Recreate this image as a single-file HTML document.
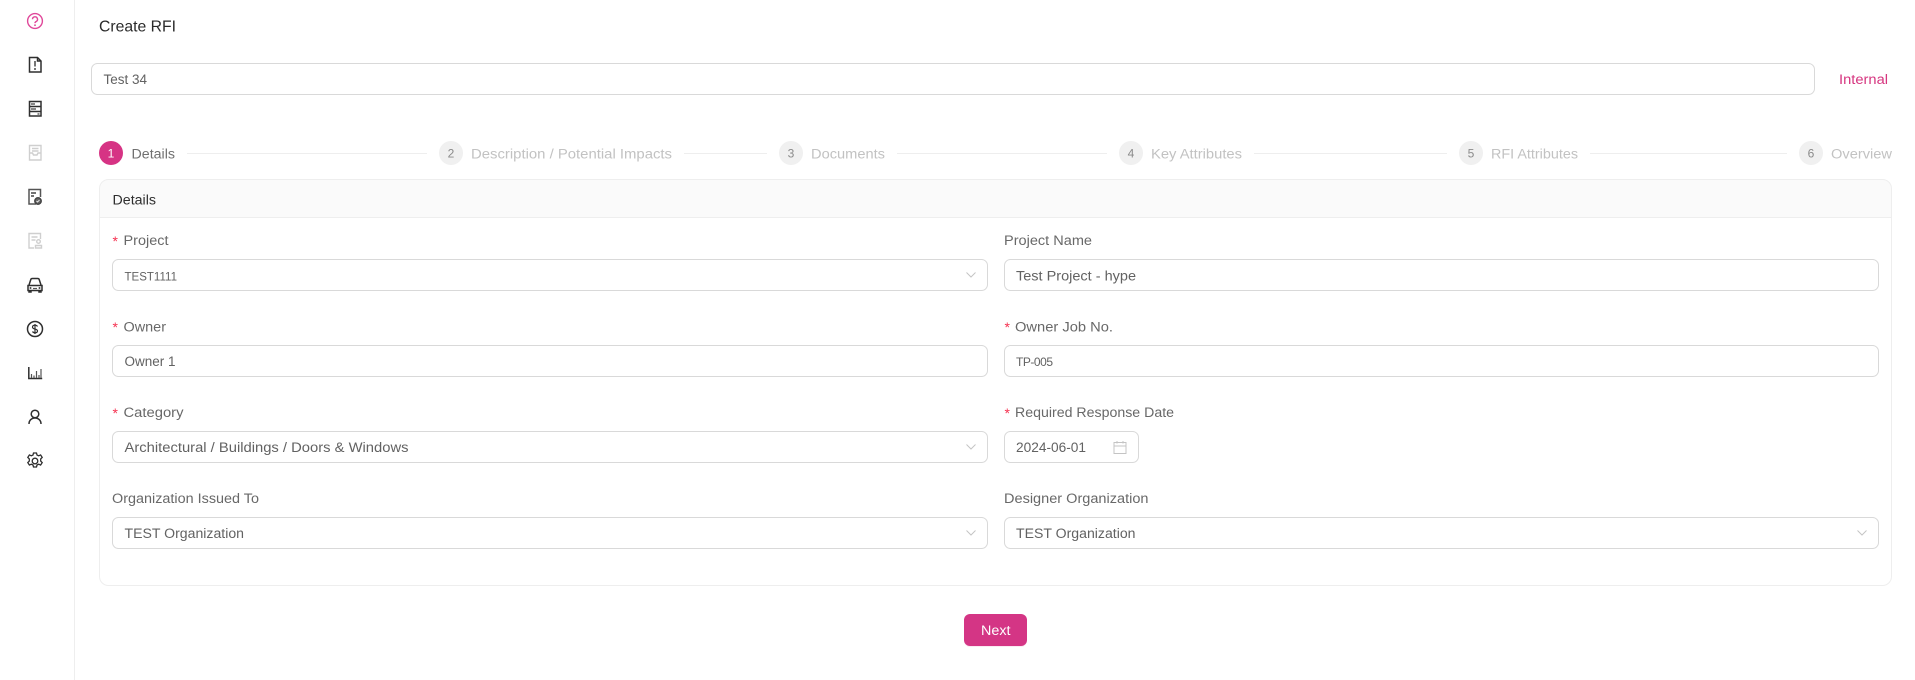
<!DOCTYPE html>
<html><head><meta charset="utf-8"><title>Create RFI</title>
<style>
html,body{margin:0;padding:0;background:#fff;width:1915px;height:680px;overflow:hidden}
svg{display:block}
text{font-family:"Liberation Sans",sans-serif;font-size:13.5px;fill:#686868}
.v{fill:#626262}
.d{fill:#c2c2c2}
.n{fill:#8a8a8a;font-size:12px;text-anchor:middle}
.s{fill:#f5304f;font-size:14px}
.b{fill:none;stroke:#d9d9d9;stroke-width:1}
.l{stroke:#eeeeee;stroke-width:1}
.c{fill:none;stroke:#c4c4c4;stroke-width:1}
.i{fill:none;stroke:#2f2f2f;stroke-width:1.5}
.g{fill:none;stroke:#cfcfcf;stroke-width:1.4}
</style></head><body>
<svg xmlns="http://www.w3.org/2000/svg" width="1915" height="680" viewBox="0 0 1915 680">
<rect width="1915" height="680" fill="#fff"/>
<line x1="74.5" y1="0" x2="74.5" y2="680" stroke="#eeeeee"/>

<!-- sidebar icons -->
<g fill="none" stroke="#e0489a" stroke-width="1.4"><circle cx="35" cy="21" r="7.4"/><path d="M32.5 19.3a2.5 2.5 0 1 1 3.7 2.2c-.8.4-1.2.9-1.2 1.6"/></g><circle cx="35" cy="25.2" r=".9" fill="#e0489a"/>
<g class="i"><path d="M29.500 57.500h8l3.500 3.500v11h-11.500z"/><path d="M37.500 57.500v3.500h3.500"/><path d="M35 61v5.500M35 68v2" stroke-width="1.800" stroke="#666"/></g>
<g class="i"><rect x="29.500" y="101.500" width="11.500" height="14.500"/><path d="M29.500 106.500h11.500M29.500 111.500h11.500"/><path d="M31 104h4M31 109h5M37.500 114h2" stroke="#777" stroke-width="1.800"/></g>
<g class="g"><path d="M29.500 145.500h11.500v14.500h-11.500z"/><path d="M29.500 153h3l1 2h3.500l1-2h3M32 148.500h6.500M32 151h6.500"/></g>
<g class="i"><path d="M40.500 197v-7.500h-11.500v14.500h7" stroke="#555"/><path d="M31 193h5M31 196h3" stroke="#444"/><circle cx="38" cy="201" r="3.200" fill="#666" stroke="#444"/></g>
<path d="M36.500 201l1 1 2-2" fill="none" stroke="#fff" stroke-width=".8"/>
<g class="g"><path d="M40.500 239v-5.500h-11.500v14.500h5"/><path d="M31.500 237h6M31.500 240h4"/><circle cx="38.500" cy="241.500" r="1.800"/><path d="M35.500 248v-2.500h6v2.500z"/></g>
<g class="i"><path d="M29 285l1.800-5.500c.2-.7.800-1 1.500-1h5.400c.7 0 1.300.3 1.500 1l1.800 5.500"/><path d="M28 285.500h14v5h-14zM29 290.500v1.500h2v-1.500M39 290.500v1.500h2v-1.500"/></g>
<path d="M33 288.500h4" stroke="#555" stroke-width="1.200"/><circle cx="30.500" cy="288" r="1" fill="#444"/><circle cx="39.500" cy="288" r="1" fill="#444"/>
<g class="i"><circle cx="35" cy="329" r="7.500"/><path d="M37.500 326.500c-.5-.9-1.400-1.300-2.500-1.300-1.400 0-2.500.7-2.500 1.900 0 2.600 5 1.300 5 3.800 0 1.200-1.100 1.900-2.500 1.900-1.100 0-2-.5-2.500-1.300M35 324v10" stroke-width="1.200"/></g>
<g class="i"><path d="M28.800 367v11.500h13.400"/><path d="M31.500 378v-4M34 378v-2.500M36.500 378v-7M39 378v-3M41 378v-9" stroke="#555" stroke-width="1.200"/></g>
<g class="i"><circle cx="35" cy="414" r="3.800"/><path d="M29 424c0-3.500 2.400-6 6-6s6 2.500 6 6"/></g>
<g class="i" style="stroke-width:1.300"><circle cx="35" cy="461" r="2.800"/><path d="M33.500 453h3l.5 2 1.700.8 1.900-.9 1.600 2.500-1.500 1.500v2.200l1.500 1.500-1.600 2.500-1.900-.9-1.700.8-.5 2h-3l-.5-2-1.700-.8-1.900.9-1.600-2.500 1.500-1.500v-2.200l-1.500-1.500 1.600-2.500 1.900.9 1.700-.8z"/></g>

<!-- header -->
<text x="99" y="31.500" textLength="77" lengthAdjust="spacingAndGlyphs" style="font-size:16px;fill:#2a2a2a">Create RFI</text>
<rect class="b" x="91.500" y="63.500" width="1723" height="31" rx="6"/>
<text class="v" x="103.500" y="84" textLength="43.500" lengthAdjust="spacingAndGlyphs">Test 34</text>
<text x="1839" y="84" textLength="49" lengthAdjust="spacingAndGlyphs" style="fill:#d6357f">Internal</text>

<!-- stepper -->
<circle cx="111" cy="153" r="12" fill="#d63384"/>
<text x="111" y="157.500" text-anchor="middle" style="font-size:12px;fill:#fff">1</text>
<text x="131.500" y="158.500" textLength="43.500" lengthAdjust="spacingAndGlyphs" style="fill:#707070">Details</text>
<line class="l" x1="187" y1="153.500" x2="427" y2="153.500"/>
<circle cx="451" cy="153" r="12" fill="#f0f0f0"/><text class="n" x="451" y="157.500">2</text>
<text class="d" x="471" y="158.500" textLength="201" lengthAdjust="spacingAndGlyphs">Description / Potential Impacts</text>
<line class="l" x1="684" y1="153.500" x2="767" y2="153.500"/>
<circle cx="791" cy="153" r="12" fill="#f0f0f0"/><text class="n" x="791" y="157.500">3</text>
<text class="d" x="811" y="158.500" textLength="74" lengthAdjust="spacingAndGlyphs">Documents</text>
<line class="l" x1="897" y1="153.500" x2="1107" y2="153.500"/>
<circle cx="1131" cy="153" r="12" fill="#f0f0f0"/><text class="n" x="1131" y="157.500">4</text>
<text class="d" x="1151" y="158.500" textLength="91" lengthAdjust="spacingAndGlyphs">Key Attributes</text>
<line class="l" x1="1254" y1="153.500" x2="1447" y2="153.500"/>
<circle cx="1471" cy="153" r="12" fill="#f0f0f0"/><text class="n" x="1471" y="157.500">5</text>
<text class="d" x="1491" y="158.500" textLength="87" lengthAdjust="spacingAndGlyphs">RFI Attributes</text>
<line class="l" x1="1590" y1="153.500" x2="1787" y2="153.500"/>
<circle cx="1811" cy="153" r="12" fill="#f0f0f0"/><text class="n" x="1811" y="157.500">6</text>
<text class="d" x="1831" y="158.500" textLength="61" lengthAdjust="spacingAndGlyphs">Overview</text>

<!-- card -->
<path d="M99.500 217.500v-29a9 9 0 0 1 9-9h1774a9 9 0 0 1 9 9v29z" fill="#fafafa"/>
<rect x="99.500" y="179.500" width="1792" height="406" rx="9" fill="none" stroke="#eeeeee"/>
<line class="l" x1="99.500" y1="217.500" x2="1891.500" y2="217.500"/>
<text x="112.500" y="204.500" textLength="43.500" lengthAdjust="spacingAndGlyphs" style="fill:#2e2e2e">Details</text>

<!-- row 1 -->
<text class="s" x="112.500" y="246">*</text>
<text x="123.500" y="245" textLength="45" lengthAdjust="spacingAndGlyphs">Project</text>
<rect class="b" x="112.500" y="259.500" width="875" height="31" rx="6"/>
<text class="v" x="124.500" y="280.500" textLength="52.500" lengthAdjust="spacing" style="font-size:11.500px">TEST1111</text>
<path class="c" d="M966.500 272.500l4.500 4.500 4.500-4.500"/>
<text x="1004" y="245" textLength="88" lengthAdjust="spacingAndGlyphs">Project Name</text>
<rect class="b" x="1004.500" y="259.500" width="874" height="31" rx="6"/>
<text class="v" x="1016" y="280.500" textLength="120" lengthAdjust="spacingAndGlyphs">Test Project - hype</text>

<!-- row 2 -->
<text class="s" x="112.500" y="332">*</text>
<text x="123.500" y="331.500" textLength="42.500" lengthAdjust="spacingAndGlyphs">Owner</text>
<rect class="b" x="112.500" y="345.500" width="875" height="31" rx="6"/>
<text class="v" x="124.500" y="366" textLength="51" lengthAdjust="spacingAndGlyphs">Owner 1</text>
<text class="s" x="1004.500" y="332">*</text>
<text x="1015" y="331.500" textLength="98" lengthAdjust="spacingAndGlyphs">Owner Job No.</text>
<rect class="b" x="1004.500" y="345.500" width="874" height="31" rx="6"/>
<text class="v" x="1016" y="366" textLength="37" lengthAdjust="spacing" style="font-size:12px">TP-005</text>

<!-- row 3 -->
<text class="s" x="112.500" y="418">*</text>
<text x="123.500" y="417" textLength="60" lengthAdjust="spacingAndGlyphs">Category</text>
<rect class="b" x="112.500" y="431.500" width="875" height="31" rx="6"/>
<text class="v" x="124.500" y="452" textLength="284" lengthAdjust="spacingAndGlyphs">Architectural / Buildings / Doors &amp; Windows</text>
<path class="c" d="M966.500 444.500l4.500 4.500 4.500-4.500"/>
<text class="s" x="1004.500" y="418">*</text>
<text x="1015" y="417" textLength="159" lengthAdjust="spacingAndGlyphs">Required Response Date</text>
<rect class="b" x="1004.500" y="431.500" width="134" height="31" rx="6"/>
<text class="v" x="1016" y="452" textLength="70" lengthAdjust="spacingAndGlyphs">2024-06-01</text>
<g class="c"><rect x="1114" y="442.500" width="12" height="11"/><path d="M1114 446h12M1117 441v2.500M1123 441v2.500"/></g>

<!-- row 4 -->
<text x="112" y="503" textLength="147" lengthAdjust="spacingAndGlyphs">Organization Issued To</text>
<rect class="b" x="112.500" y="517.500" width="875" height="31" rx="6"/>
<text class="v" x="124.500" y="538" textLength="119.500" lengthAdjust="spacingAndGlyphs">TEST Organization</text>
<path class="c" d="M966.500 530.500l4.500 4.500 4.500-4.500"/>
<text x="1004" y="503" textLength="144.500" lengthAdjust="spacingAndGlyphs">Designer Organization</text>
<rect class="b" x="1004.500" y="517.500" width="874" height="31" rx="6"/>
<text class="v" x="1016" y="538" textLength="119.500" lengthAdjust="spacingAndGlyphs">TEST Organization</text>
<path class="c" d="M1857.500 530.500l4.500 4.500 4.500-4.500"/>

<!-- button -->
<rect x="964" y="615" width="63" height="32" rx="6" fill="#fbeaf2"/>
<rect x="964" y="614" width="63" height="32" rx="6" fill="#d43585"/>
<text x="981" y="635" textLength="29.500" lengthAdjust="spacingAndGlyphs" style="fill:#fff">Next</text>
</svg>
</body></html>
